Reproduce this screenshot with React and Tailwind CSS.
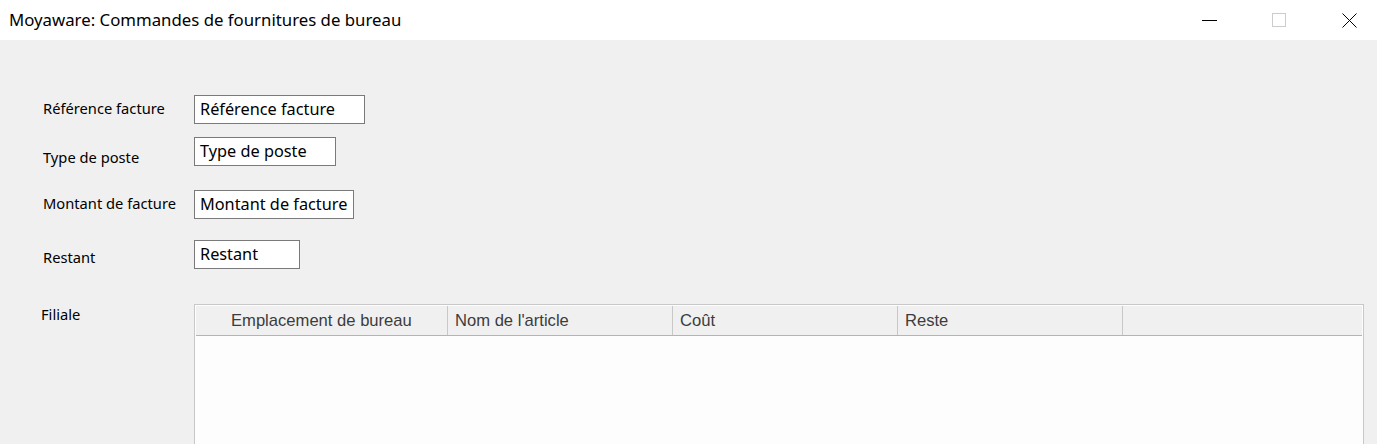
import React from 'react';

const FIELDS = [
  { label: 'Référence facture', width: 'w-[171px]', rowClass: 'mt-[55px]', labelClass: 'pt-[3px]' },
  { label: 'Type de poste', width: 'w-[142px]', rowClass: 'mt-[13px]', labelClass: 'pt-[10px]' },
  { label: 'Montant de facture', width: 'w-[160px]', rowClass: 'mt-[23px]', labelClass: 'pt-[3px]' },
  { label: 'Restant', width: 'w-[106px]', rowClass: 'mt-[21px]', labelClass: 'pt-[7px]' },
];

const COLUMNS = ['Emplacement de bureau', "Nom de l'article", 'Coût', 'Reste'];

function TitleBar() {
  return (
    <div className="h-[40px] bg-white flex items-center justify-between">
      <span className="pl-[9px] text-[16.8px] text-black">
        Moyaware: Commandes de fournitures de bureau
      </span>
      <div className="flex h-full pr-[5px]">
        <div className="w-[46px] h-full flex items-center justify-center mr-[24px]">
          <div className="w-[15px] h-px bg-black" />
        </div>
        <div className="w-[46px] h-full flex items-center justify-center mr-[24px]">
          <div className="w-[14px] h-[14px] border border-[#cccccc]" />
        </div>
        <div className="w-[46px] h-full flex items-center justify-center">
          <svg width="15" height="15" viewBox="0 0 15 15">
            <path d="M0.5 0.5 L14.5 14.5 M14.5 0.5 L0.5 14.5" stroke="#000" strokeWidth="1" />
          </svg>
        </div>
      </div>
    </div>
  );
}

function Field({ field }) {
  return (
    <div className={`flex items-start ${field.rowClass}`}>
      <div className={`w-[194px] shrink-0 pl-[43px] text-[14.7px] text-black leading-[20px] whitespace-nowrap ${field.labelClass}`}>
        {field.label}
      </div>
      <div className={`${field.width} h-[29px] border border-[#7a7a7a] bg-white pl-[5px] text-[16.3px] leading-[27px] text-black whitespace-nowrap overflow-hidden`}>
        {field.label}
      </div>
    </div>
  );
}

export default function App() {
  return (
    <div className="w-[1377px] h-[444px] overflow-hidden bg-[#f0f0f0] font-['Noto_Sans',sans-serif]">
      <TitleBar />
      {FIELDS.map((f) => (
        <Field key={f.label} field={f} />
      ))}
      <div className="flex items-start mt-[35px]">
        <div className="w-[194px] shrink-0 pl-[41px] text-[14.7px] leading-[20px] text-black">Filiale</div>
        <div className="w-[1170px] h-[160px] border border-[#c8c8c8] bg-[#fdfdfd] p-px">
          <div className="flex h-[30px] bg-[#f0f0f0] border-b border-[#b4b4b4] font-['Liberation_Sans',sans-serif] text-[16.6px] text-[#3c3c3c]">
            {COLUMNS.map((c, i) => (
              <div
                key={c}
                className={`shrink-0 h-full flex items-center pt-px border-r border-[#c8c8c8] ${i === 0 ? 'w-[252px] pl-[35px]' : 'w-[225px] pl-[7px]'}`}
              >
                {c}
              </div>
            ))}
            <div className="flex-1" />
          </div>
        </div>
      </div>
    </div>
  );
}
